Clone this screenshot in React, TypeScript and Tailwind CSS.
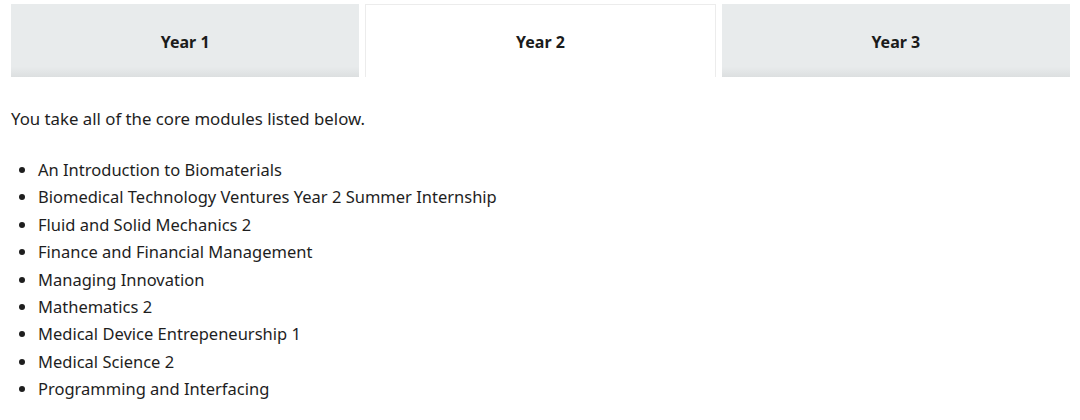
import React from "react";

const modules = [
  "An Introduction to Biomaterials",
  "Biomedical Technology Ventures Year 2 Summer Internship",
  "Fluid and Solid Mechanics 2",
  "Finance and Financial Management",
  "Managing Innovation",
  "Mathematics 2",
  "Medical Device Entrepeneurship 1",
  "Medical Science 2",
  "Programming and Interfacing",
];

function Tab({ label, active }: { label: string; active?: boolean }) {
  return (
    <div
      className={
        active
          ? "flex-1 h-[73px] flex items-center justify-center bg-white border border-b-0 border-[#ececec] pt-[2px]"
          : "flex-1 h-[73px] flex items-center justify-center bg-[linear-gradient(to_bottom,#e8ebec_0%,#e8ebec_86%,#dcdfe0_100%)] pt-[2px]"
      }
    >
      <span className="text-[16px] font-bold text-[#1b1b1b]">{label}</span>
    </div>
  );
}

export default function App() {
  return (
    <div
      className="w-[1080px] h-[420px] bg-white text-[#1e1e1e] px-[11px] pt-[4px]"
      style={{ fontFamily: '"Noto Sans", "Open Sans", sans-serif' }}
    >
      <div className="flex gap-[6px] w-[1059px]">
        <Tab label="Year 1" />
        <Tab label="Year 2" active />
        <Tab label="Year 3" />
      </div>
      <p className="mt-[28px] text-[16.8px] leading-[27px]">You take all of the core modules listed below.</p>
      <ul className="mt-[24px] pl-[27px] list-disc text-[16.5px] leading-[27.4px]">
        {modules.map((m) => (
          <li key={m}>{m}</li>
        ))}
      </ul>
    </div>
  );
}
